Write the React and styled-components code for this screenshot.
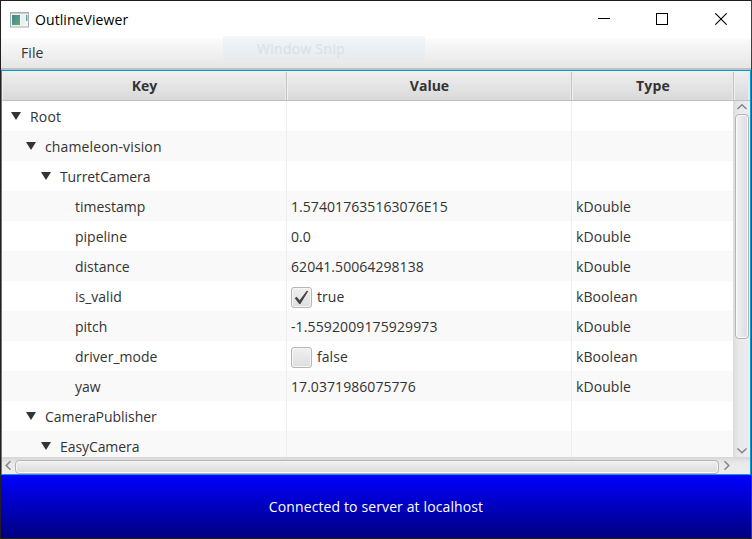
import React from 'react';
import styled, { createGlobalStyle } from 'styled-components';

const Global = createGlobalStyle`
  * { box-sizing: border-box; }
  body { margin: 0; background: #fff; }
`;

const Window = styled.div`
  position: relative;
  width: 752px;
  height: 539px;
  display: flex;
  flex-direction: column;
  border: 1px solid #231f20;
  border-right-color: #3c3f45;
  background: #fff;
  font: 14px/20px 'Open Sans', 'Noto Sans', sans-serif;
  color: #333;
  overflow: hidden;
  white-space: nowrap;
`;

const TopEdge = styled.div`
  position: absolute;
  top: -1px;
  left: 431px;
  width: 320px;
  height: 1px;
  background: #6b6b6b;
`;

const TitleBar = styled.header`
  height: 37px;
  flex: none;
  display: flex;
  align-items: center;
  padding-left: 9px;
  color: #000;
`;

const Title = styled.h1`
  flex: 1;
  margin: 0 0 0 6px;
  font-size: 14px;
  font-weight: 400;
  letter-spacing: 0.08px;
`;

const WindowButton = styled.button`
  width: 58px;
  height: 37px;
  padding: 0 0 1px;
  border: 0;
  background: none;
  display: flex;
  align-items: center;
  justify-content: center;
  &:last-child { width: 60px; }
`;

const MenuBar = styled.nav`
  height: 32px;
  flex: none;
  display: flex;
  align-items: center;
  padding: 0 0 0 20px;
  background: linear-gradient(#fbfbfb, #e6e6e6);
  border-bottom: 2px solid #bcc3c6;
`;

const Ghost = styled.div`
  position: absolute;
  left: 222px;
  top: 35px;
  width: 202px;
  height: 24px;
  padding-left: 34px;
  line-height: 25px;
  letter-spacing: 0.3px;
  background: rgba(220, 234, 245, 0.36);
  color: #dcdfe1;
`;

const Tree = styled.section`
  height: 405px;
  flex: none;
  display: flex;
  flex-direction: column;
  border: 1px solid #039ed3;
  border-top-color: #0096c9;
`;

const HeaderRow = styled.div`
  height: 30px;
  flex: none;
  display: grid;
  grid-template-columns: 285px 285px 162px 16px;
  border-bottom: 1px solid #c0c0c0;
`;

const HeaderCell = styled.div`
  display: flex;
  align-items: center;
  justify-content: center;
  font-weight: 700;
  letter-spacing: ${(p) => p.$track || 0}px;
  background: linear-gradient(#efefef, #d9d9d9);
  box-shadow: inset 1px 1px 0 #f0f0f0, inset -1px 0 0 ${(p) => (p.$last ? '#e8e8e8' : '#c4c4c4')}, inset -2px 0 0 #e9e9e9;
`;

const Body = styled.div`
  height: 356px;
  display: flex;
`;

const Rows = styled.div`
  width: 731px;
  overflow: hidden;
`;

const Row = styled.div`
  height: 30px;
  display: grid;
  grid-template-columns: 285px 285px 161px;
  background: ${(p) => (p.$odd ? '#f9f9f9' : '#fff')};
`;

const Cell = styled.div`
  display: flex;
  align-items: center;
  padding-left: ${(p) => p.$indent ?? 4}px;
  border-right: ${(p) => (p.$last ? 0 : 1)}px solid #ededed;
`;

const Label = styled.span`
  padding-top: ${(p) => p.$drop || 0}px;
  letter-spacing: ${(p) => p.$track || 0}px;
`;

const Disclosure = styled.svg`
  width: 10px;
  height: 8px;
  margin-right: 9px;
  flex: none;
`;

const CheckBox = styled.span`
  width: 21px;
  height: 21px;
  margin: 3px 5px 0 0;
  border: 1px solid #b5b5b5;
  border-radius: 3px;
  background: linear-gradient(#f0f0f0, #dedede);
  box-shadow: inset 0 0 0 1px #f6f6f6;
  display: flex;
  align-items: center;
  justify-content: center;
`;

const VScroll = styled.div`
  width: 17px;
  display: flex;
  flex-direction: column;
  align-items: center;
  background: linear-gradient(90deg, #dcdcdc, #e9e9e9 35%, #ededed);
`;

const VThumb = styled.div`
  width: 14px;
  height: 225px;
  flex: none;
  margin: 0 0 auto 1px;
  border: 1px solid #b4b4b4;
  border-radius: 4px;
  background: linear-gradient(90deg, #f1f1f1, #dcdcdc);
  box-shadow: inset 0 0 0 1px #fafafa;
`;

const HScroll = styled.div`
  height: 17px;
  display: flex;
  align-items: center;
  background: linear-gradient(#d6d6d6, #e9e9e9 35%, #ececec);
`;

const HThumb = styled.div`
  width: 704px;
  height: 14px;
  margin-top: 2px;
  border: 1px solid #b4b4b4;
  border-radius: 4px;
  background: linear-gradient(#f1f1f1, #dadada);
  box-shadow: inset 0 0 0 1px #f6f6f6;
`;

const Arrow = styled.span`
  width: ${(p) => p.$w}px;
  height: ${(p) => p.$h}px;
  flex: none;
  display: flex;
  align-items: center;
  justify-content: center;
`;

const Status = styled.footer`
  flex: 1;
  display: flex;
  align-items: center;
  justify-content: center;
  color: #fff;
  background: linear-gradient(#0000ff, #000080);
`;

const rows = [
  { key: 'Root', depth: 0, branch: true, track: 0.2 },
  { key: 'chameleon-vision', depth: 1, branch: true, track: 0.13 },
  { key: 'TurretCamera', depth: 2, branch: true, track: -0.1 },
  { key: 'timestamp', depth: 3, value: '1.574017635163076E15', type: 'kDouble' },
  { key: 'pipeline', depth: 3, value: '0.0', type: 'kDouble' },
  { key: 'distance', depth: 3, value: '62041.50064298138', type: 'kDouble' },
  { key: 'is_valid', depth: 3, value: 'true', checked: true, type: 'kBoolean' },
  { key: 'pitch', depth: 3, value: '-1.5592009175929973', type: 'kDouble', valueTrack: 0.12 },
  { key: 'driver_mode', depth: 3, value: 'false', checked: false, type: 'kBoolean' },
  { key: 'yaw', depth: 3, value: '17.0371986075776', type: 'kDouble' },
  { key: 'CameraPublisher', depth: 1, branch: true, track: -0.05 },
  { key: 'EasyCamera', depth: 2, branch: true, track: -0.08 },
];

function AppIcon() {
  return (
    <svg width="19" height="16" viewBox="0 0 19 16">
      <defs>
        <linearGradient id="screen" x1="0" y1="0" x2="1" y2="1">
          <stop offset="0" stopColor="#4a7f9c" />
          <stop offset="1" stopColor="#5cae6c" />
        </linearGradient>
      </defs>
      <rect x="0.5" y="0.5" width="18" height="14.5" fill="#f4f4f4" stroke="#a9adb2" />
      <path d="M1 1.5h17" stroke="#c9ccd0" />
      <rect x="2" y="3" width="8" height="10" fill="url(#screen)" />
      <rect x="11" y="3" width="4" height="10" fill="#eceeef" />
      <rect x="16" y="3" width="1.4" height="6" fill="#5b9fa0" />
    </svg>
  );
}

function Chevron({ dir }) {
  const paths = {
    up: 'M1.5 7L6 2.8L10.5 7',
    down: 'M1.5 3.5L6 7.7L10.5 3.5',
    left: 'M7.5 1.2L3.2 5.5L7.5 9.8',
    right: 'M3.5 1.2L7.8 5.5L3.5 9.8',
  };
  return (
    <svg width="12" height="11" viewBox="0 0 12 11">
      <path d={paths[dir]} fill="none" stroke="#858585" strokeWidth="1.5" />
    </svg>
  );
}

function TreeRow({ row, odd }) {
  return (
    <Row $odd={odd}>
      <Cell $indent={row.branch ? 9 + row.depth * 15 : 28 + row.depth * 15}>
        {row.branch && (
          <Disclosure viewBox="0 0 10 8"><path d="M0 0H10L5 8Z" fill="#333" /></Disclosure>
        )}
        <Label $drop={2} $track={row.track}>{row.key}</Label>
      </Cell>
      <Cell>
        {row.checked !== undefined && (
          <CheckBox>
            {row.checked && (
              <svg width="15" height="15" viewBox="0 0 15 15">
                <path d="M0.8 8.2L2.6 6.8L5.6 10.3L12.8 0.8L14.2 1.2L6.4 14H5.2Z" fill="#444" />
              </svg>
            )}
          </CheckBox>
        )}
        <Label $drop={2} $track={row.valueTrack ?? 0.06}>{row.value}</Label>
      </Cell>
      <Cell $last><Label $drop={2} $track={0.08}>{row.type}</Label></Cell>
    </Row>
  );
}

export default function App() {
  return (
    <>
      <Global />
      <Window>
        <TitleBar>
          <AppIcon />
          <Title>OutlineViewer</Title>
          <WindowButton aria-label="Minimize">
            <svg width="12" height="12"><path d="M0 5.5H12" stroke="#000" /></svg>
          </WindowButton>
          <WindowButton aria-label="Maximize">
            <svg width="12" height="12"><rect x="0.5" y="0.5" width="11" height="11" fill="none" stroke="#000" /></svg>
          </WindowButton>
          <WindowButton aria-label="Close">
            <svg width="12" height="12"><path d="M0.3 0.3L11.7 11.7M11.7 0.3L0.3 11.7" stroke="#000" strokeWidth="1.1" /></svg>
          </WindowButton>
        </TitleBar>
        <MenuBar><Label $track={0.1}>File</Label></MenuBar>
        <Tree>
          <HeaderRow>
            <HeaderCell>Key</HeaderCell>
            <HeaderCell>Value</HeaderCell>
            <HeaderCell $track={0.2}>Type</HeaderCell>
            <HeaderCell $last />
          </HeaderRow>
          <Body>
            <Rows>
              {rows.map((row, i) => <TreeRow key={row.key} row={row} odd={i % 2 === 1} />)}
            </Rows>
            <VScroll>
              <Arrow $w={17} $h={13}><Chevron dir="up" /></Arrow>
              <VThumb />
              <Arrow $w={17} $h={13}><Chevron dir="down" /></Arrow>
            </VScroll>
          </Body>
          <HScroll>
            <Arrow $w={13} $h={16}><Chevron dir="left" /></Arrow>
            <HThumb />
            <Arrow $w={16} $h={16}><Chevron dir="right" /></Arrow>
          </HScroll>
        </Tree>
        <Status><Label $track={0.12}>Connected to server at localhost</Label></Status>
        <Ghost>Window Snip</Ghost>
        <TopEdge />
      </Window>
    </>
  );
}
